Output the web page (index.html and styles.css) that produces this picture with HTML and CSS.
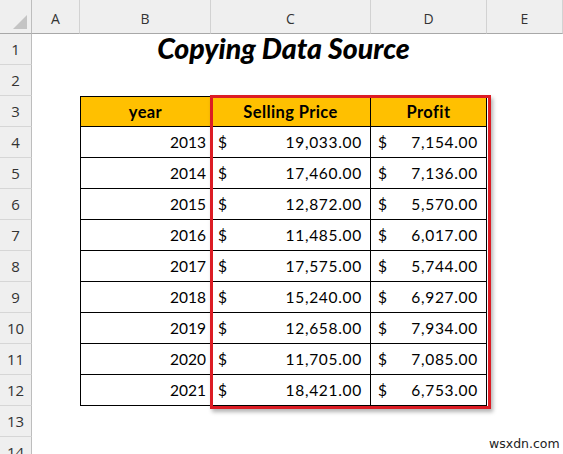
FILE: index.html
```html
<!DOCTYPE html>
<html>
<head>
<meta charset="utf-8">
<link rel="stylesheet" href="styles.css">
</head>
<body>
<div class="sheet">
  <div class="corner"><span class="tri"></span></div>
  <div class="colh">A</div>
  <div class="colh">B</div>
  <div class="colh">C</div>
  <div class="colh">D</div>
  <div class="colh">E</div>

  <div class="rowh">1</div>
  <div class="cell"></div>
  <div class="cell title">Copying Data Source</div>
  <div class="cell"></div>

  <div class="rowh">2</div>
  <div class="cell"></div><div class="cell"></div><div class="cell"></div><div class="cell"></div><div class="cell"></div>

  <div class="rowh">3</div>
  <div class="cell"></div>
  <div class="cell th first">year</div>
  <div class="cell th">Selling Price</div>
  <div class="cell th">Profit</div>
  <div class="cell"></div>

  <div class="rowh">4</div><div class="cell"></div>
  <div class="cell td first yr">2013</div>
  <div class="cell td money"><span>$</span><span>19,033.00</span></div>
  <div class="cell td money"><span>$</span><span>7,154.00</span></div>
  <div class="cell"></div>

  <div class="rowh">5</div><div class="cell"></div>
  <div class="cell td first yr">2014</div>
  <div class="cell td money"><span>$</span><span>17,460.00</span></div>
  <div class="cell td money"><span>$</span><span>7,136.00</span></div>
  <div class="cell"></div>

  <div class="rowh">6</div><div class="cell"></div>
  <div class="cell td first yr">2015</div>
  <div class="cell td money"><span>$</span><span>12,872.00</span></div>
  <div class="cell td money"><span>$</span><span>5,570.00</span></div>
  <div class="cell"></div>

  <div class="rowh">7</div><div class="cell"></div>
  <div class="cell td first yr">2016</div>
  <div class="cell td money"><span>$</span><span>11,485.00</span></div>
  <div class="cell td money"><span>$</span><span>6,017.00</span></div>
  <div class="cell"></div>

  <div class="rowh">8</div><div class="cell"></div>
  <div class="cell td first yr">2017</div>
  <div class="cell td money"><span>$</span><span>17,575.00</span></div>
  <div class="cell td money"><span>$</span><span>5,744.00</span></div>
  <div class="cell"></div>

  <div class="rowh">9</div><div class="cell"></div>
  <div class="cell td first yr">2018</div>
  <div class="cell td money"><span>$</span><span>15,240.00</span></div>
  <div class="cell td money"><span>$</span><span>6,927.00</span></div>
  <div class="cell"></div>

  <div class="rowh">10</div><div class="cell"></div>
  <div class="cell td first yr">2019</div>
  <div class="cell td money"><span>$</span><span>12,658.00</span></div>
  <div class="cell td money"><span>$</span><span>7,934.00</span></div>
  <div class="cell"></div>

  <div class="rowh">11</div><div class="cell"></div>
  <div class="cell td first yr">2020</div>
  <div class="cell td money"><span>$</span><span>11,705.00</span></div>
  <div class="cell td money"><span>$</span><span>7,085.00</span></div>
  <div class="cell"></div>

  <div class="rowh">12</div><div class="cell"></div>
  <div class="cell td first yr">2021</div>
  <div class="cell td money"><span>$</span><span>18,421.00</span></div>
  <div class="cell td money"><span>$</span><span>6,753.00</span></div>
  <div class="cell"></div>

  <div class="rowh">13</div>
  <div class="cell"></div><div class="cell"></div><div class="cell"></div><div class="cell"></div><div class="cell"></div>

  <div class="rowh">14</div>
  <div class="cell"></div><div class="cell"></div><div class="cell"></div><div class="cell"></div><div class="cell"></div>

  <div class="select-box"></div>
  <div class="watermark">wsxdn.com</div>
</div>
</body>
</html>
```

FILE: styles.css
```css
html, body {
  margin: 0;
  padding: 0;
  background: #ffffff;
}
body {
  width: 563px;
  height: 454px;
  overflow: hidden;
}
.sheet {
  position: relative;
  display: grid;
  grid-template-columns: 32px 48px 131px 160px 116px 76px;
  grid-template-rows: 34px repeat(14, 31px);
  font-family: Lato, "Open Sans", sans-serif;
  font-size: 15.5px;
  color: #000;
  border-top: 2px solid #d6d6d6;
  margin-top: -2px;
}
.corner {
  background: #efefef;
  border-right: 1px solid #bdbdbd;
  border-bottom: 1px solid #a8a8a8;
  box-sizing: border-box;
  position: relative;
  padding-top: 2px;
}
.tri {
  position: absolute;
  right: 4px;
  bottom: 4px;
  width: 0;
  height: 0;
  border-left: 14px solid transparent;
  border-bottom: 14px solid #c4c4c4;
}
.colh {
  background: #efefef;
  border-right: 1px solid #d2d2d2;
  border-bottom: 1px solid #a8a8a8;
  box-sizing: border-box;
  display: flex;
  align-items: center;
  justify-content: center;
  font-family: "Open Sans", sans-serif;
  font-size: 14px;
  color: #333;
  padding-top: 4px;
}
.rowh {
  background: #efefef;
  border-right: 1px solid #bdbdbd;
  border-bottom: 1px solid #d6d6d6;
  box-sizing: border-box;
  display: flex;
  align-items: center;
  justify-content: center;
  font-family: "Open Sans", sans-serif;
  font-size: 15px;
  color: #333;
}
.cell {
  box-sizing: border-box;
  display: flex;
  align-items: center;
}
.title {
  grid-column: 3 / 6;
  justify-content: center;
  font-weight: 900;
  font-style: italic;
  font-size: 28.5px;
  padding-bottom: 3px;
}
.th {
  background: #ffc000;
  font-weight: 700;
  font-size: 16.5px;
  letter-spacing: 0.4px;
  justify-content: center;
  border-top: 1px solid #000;
  border-right: 1px solid #000;
  border-bottom: 1px solid #000;
}
.td {
  border-right: 1px solid #000;
  border-bottom: 1px solid #000;
}
.first {
  border-left: 1px solid #000;
}
.yr {
  justify-content: flex-end;
  padding-right: 4px;
}
.money {
  justify-content: space-between;
  padding-left: 7px;
  padding-right: 8px;
  letter-spacing: 0.7px;
}
.select-box {
  position: absolute;
  left: 210px;
  top: 95px;
  width: 281px;
  height: 314px;
  box-sizing: border-box;
  border: 3px solid #dc1c24;
  box-shadow: 2px 3px 4px rgba(0, 0, 0, 0.3);
  pointer-events: none;
}
.watermark {
  position: absolute;
  left: 489px;
  top: 436px;
  font-family: "DejaVu Sans", sans-serif;
  font-size: 12.5px;
  color: #222;
}
```
